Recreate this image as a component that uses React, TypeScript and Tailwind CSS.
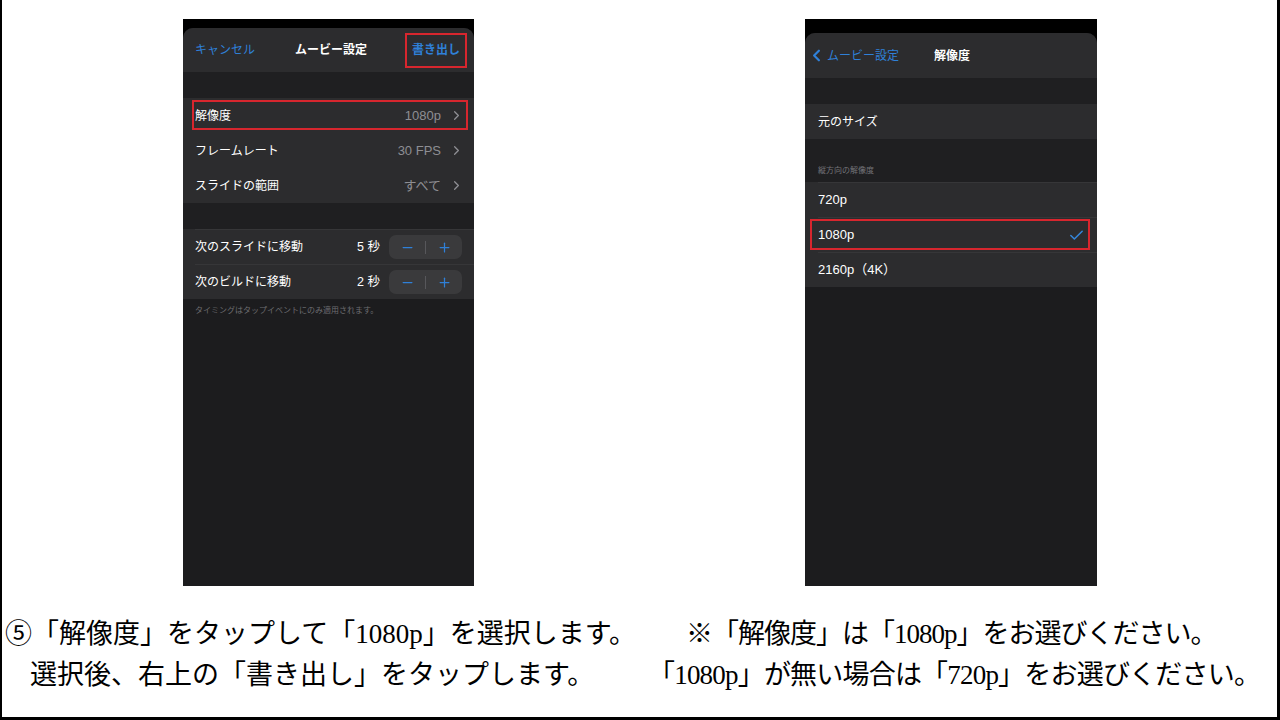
import { Check, ChevronLeft, ChevronRight, Minus, Plus } from 'lucide-react';

const ui = { fontFamily: '"Liberation Sans", "Noto Sans CJK JP", sans-serif' };
const caption = { fontFamily: '"Liberation Serif", "Noto Sans CJK JP", serif' };

function ValueRow({ label, value, boxed }: { label: string; value: string; boxed?: boolean }) {
  return (
    <div className="h-[35px] bg-[#2c2c2e] pl-3 flex items-center relative">
      <div className="flex-1 h-full flex items-center pr-[10px] border-t border-[#363638] first:border-t-0">
        <span className="text-white text-[12px] flex-1">{label}</span>
        <span className="text-[#8e8e93] text-[13px] mr-[8px]">{value}</span>
        <ChevronRight size={15} strokeWidth={2} className="text-[#8e8e93]" />
      </div>
      {boxed && (
        <div className="absolute left-[9px] right-[6px] top-[2px] bottom-[3px] border-2 border-[#d7262e]" />
      )}
    </div>
  );
}

function StepRow({ label, value }: { label: string; value: string }) {
  return (
    <div className="h-[35px] bg-[#2c2c2e] pl-3 flex items-center">
      <div className="flex-1 h-full flex items-center pr-3 border-t border-[#363638]">
        <span className="text-white text-[12px] flex-1">{label}</span>
        <span className="text-white text-[12.5px] mr-[9px]">{value}</span>
        <div className="w-[73px] h-[24px] rounded-[7px] bg-[#3a3a3c] flex items-center">
          <div className="flex-1 flex justify-center text-[#2f80d8]">
            <Minus size={15} strokeWidth={2} />
          </div>
          <div className="w-px h-[13px] bg-[#57575b]" />
          <div className="flex-1 flex justify-center text-[#2f80d8]">
            <Plus size={15} strokeWidth={2} />
          </div>
        </div>
      </div>
    </div>
  );
}

function MovieSettings() {
  return (
    <div className="w-[291px] h-[567px] bg-black flex flex-col" style={ui}>
      <div className="h-[9px] shrink-0" />
      <div className="flex-1 bg-[#1c1c1e] rounded-t-[10px] overflow-hidden flex flex-col">
        <div className="h-[44px] bg-[#2c2c2e] grid grid-cols-[1fr_auto_1fr] items-center pl-3 pr-[7px]">
          <span className="text-[#2f80d8] text-[12px]">キャンセル</span>
          <span className="text-white text-[12px] font-bold">ムービー設定</span>
          <div className="justify-self-end w-[62px] h-[35px] border-2 border-[#d7262e] flex items-center justify-center">
            <span className="text-[#2f80d8] text-[12px] font-bold">書き出し</span>
          </div>
        </div>
        <div className="h-[26px] bg-[#1f1f21]" />
        <div>
          <ValueRow label="解像度" value="1080p" boxed />
          <ValueRow label="フレームレート" value="30 FPS" />
          <ValueRow label="スライドの範囲" value="すべて" />
        </div>
        <div className="h-[26px] bg-[#1f1f21]" />
        <div>
          <StepRow label="次のスライドに移動" value="5 秒" />
          <StepRow label="次のビルドに移動" value="2 秒" />
        </div>
        <p className="pl-3 pt-[6px] text-[8px] text-[#6c6c70]">タイミングはタップイベントにのみ適用されます。</p>
      </div>
    </div>
  );
}

function ResRow({ label, selected }: { label: string; selected?: boolean }) {
  return (
    <div className="h-[35px] bg-[#2c2c2e] pl-[13px] flex items-center relative">
      <div className="flex-1 h-full flex items-center pr-[12px] border-t border-[#363638]">
        <span className="text-white text-[13px] flex-1">{label}</span>
        {selected && <Check size={17} strokeWidth={2.2} className="text-[#3585d9]" />}
      </div>
      {selected && (
        <div className="absolute left-[5px] right-[7px] top-[2px] bottom-[2px] border-2 border-[#d7262e]" />
      )}
    </div>
  );
}

function Resolution() {
  return (
    <div className="w-[292px] h-[567px] bg-black flex flex-col" style={ui}>
      <div className="h-[14px] shrink-0" />
      <div className="flex-1 bg-[#1c1c1e] rounded-t-[10px] overflow-hidden flex flex-col">
        <div className="h-[45px] bg-[#2c2c2e] grid grid-cols-[1fr_auto_1fr] items-center pl-[2px]">
          <div className="flex items-center text-[#2f80d8]">
            <ChevronLeft size={19} strokeWidth={2.8} />
            <span className="text-[12px] ml-[1px]">ムービー設定</span>
          </div>
          <span className="text-white text-[12px] font-bold">解像度</span>
          <div />
        </div>
        <div className="h-[26px] bg-[#1f1f21]" />
        <div className="h-[35px] bg-[#2c2c2e] pl-[13px] flex items-center">
          <span className="text-white text-[12px]">元のサイズ</span>
        </div>
        <div className="h-[43px] bg-[#1f1f21] flex items-end pl-[13px] pb-[5px]">
          <span className="text-[8px] text-[#737378]">縦方向の解像度</span>
        </div>
        <div>
          <ResRow label="720p" />
          <ResRow label="1080p" selected />
          <ResRow label="2160p（4K）" />
        </div>
      </div>
    </div>
  );
}

export default function App() {
  return (
    <div className="w-[1280px] h-[720px] bg-white border-l-2 border-r-[3px] border-b-[3px] border-black box-border flex flex-col">
      <div className="flex pt-[19px] pl-[181px] gap-[331px]">
        <MovieSettings />
        <Resolution />
      </div>
      <div className="flex pt-[28px] text-[27px] leading-[41px] text-black whitespace-nowrap" style={caption}>
        <div className="w-[638px] pl-[3px]">
          <p>⑤「解像度」をタップして「1080p」を選択します。</p>
          <p className="pl-[25px]">選択後、右上の「書き出し」をタップします。</p>
        </div>
        <div className="flex-1">
          <p className="pl-[46px] tracking-[-1px]">※「解像度」は「1080p」をお選びください。</p>
          <p className="pl-[8px] tracking-[-0.8px]">「1080p」が無い場合は「720p」をお選びください。</p>
        </div>
      </div>
    </div>
  );
}
